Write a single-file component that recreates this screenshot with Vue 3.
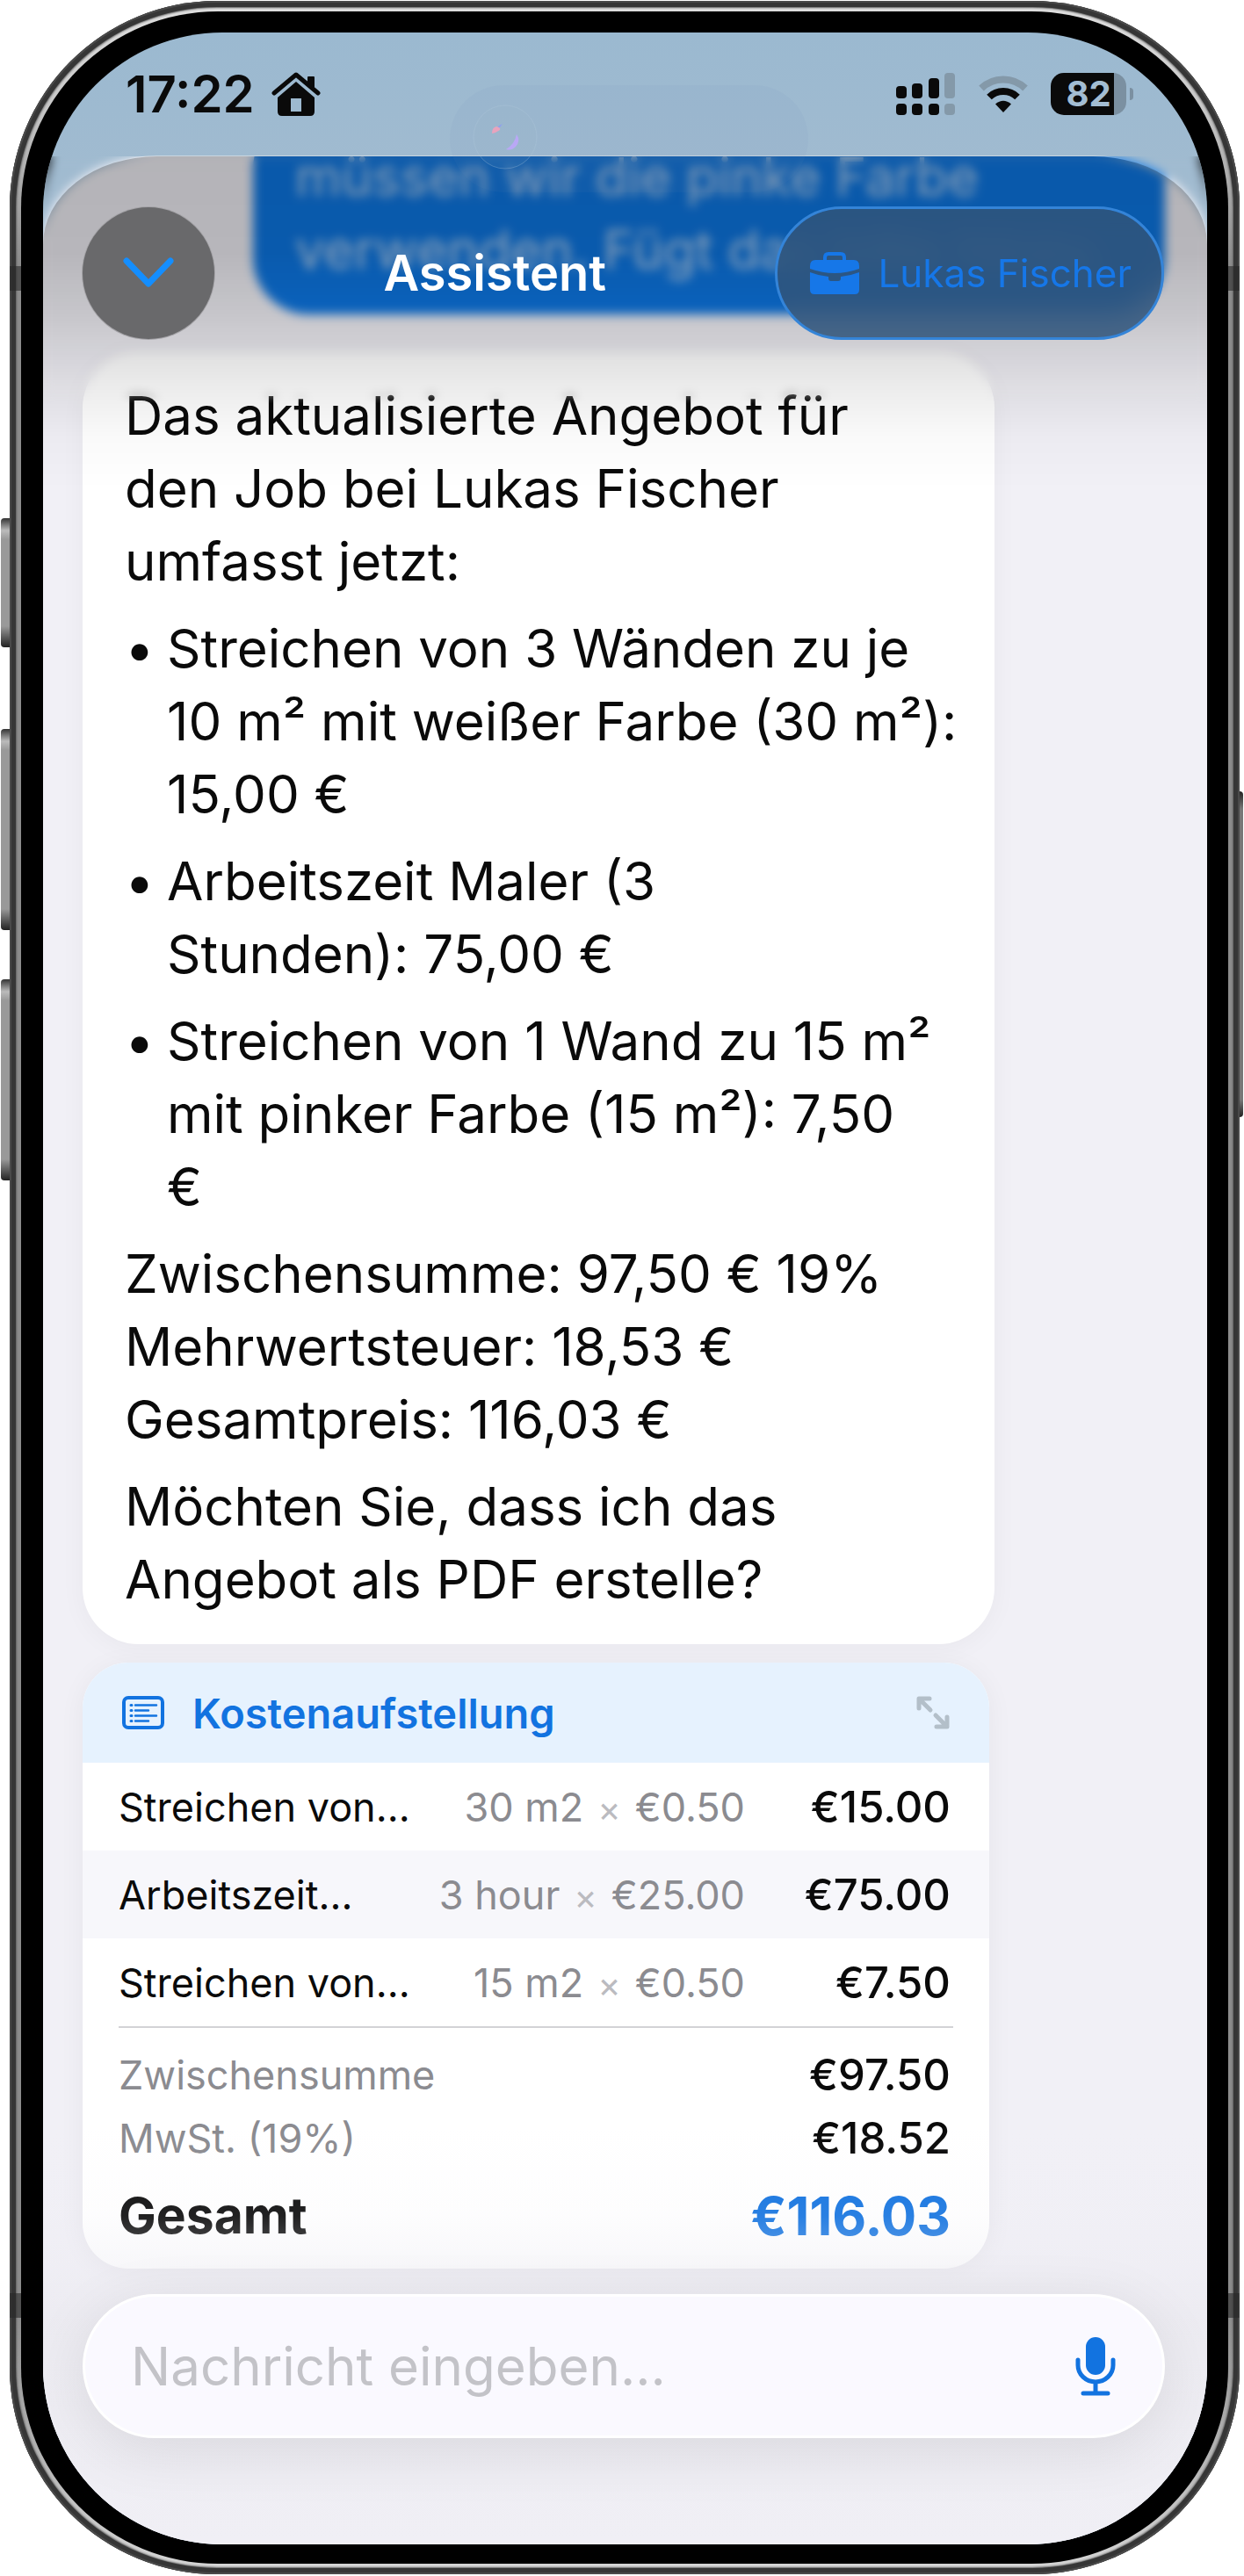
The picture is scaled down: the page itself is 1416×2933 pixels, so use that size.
<template>
    <div class="stage">
        <div class="phone">
            <!-- Hardware buttons and antenna bands -->
            <span class="side-key key-action"></span>
            <span class="side-key key-up"></span>
            <span class="side-key key-down"></span>
            <span class="side-key key-power"></span>
            <span class="antenna antenna-top"></span>
            <span class="antenna antenna-bottom"></span>

            <div class="bezel">
                <div class="screen">
                    <div class="status-bar">
                        <div class="status-left">
                            <span class="clock">17:22</span>
                            <svg class="icon-home" width="56" height="50" viewBox="0 0 56 50" fill="#0a0a0a">
                                <path d="M3 24 28 3 53 24" fill="none" stroke="#0a0a0a" stroke-width="5" stroke-linecap="round" stroke-linejoin="round"></path>
                                <path d="M41 6q0-1 1-1h6q1 0 1 1v14l-8-7z"></path>
                                <path fill-rule="evenodd" d="M28 11 49 29v16q0 5-5 5H12q-5 0-5-5V29zM22 30v15h12V30z"></path>
                            </svg>
                        </div>
                        <div class="status-right">
                            <svg width="68" height="48" viewBox="0 0 68 48" fill="#0a0a0a">
                                <rect x="0" y="15" width="12" height="14" rx="4"></rect>
                                <rect x="18" y="12" width="12" height="17" rx="4"></rect>
                                <rect x="37" y="6" width="12" height="23" rx="4"></rect>
                                <rect x="55" y="0" width="12" height="29" rx="4" fill="#8499a9"></rect>
                                <rect x="0" y="35" width="12" height="13" rx="4"></rect>
                                <rect x="18" y="35" width="12" height="13" rx="4"></rect>
                                <rect x="37" y="35" width="12" height="13" rx="4"></rect>
                                <rect x="55" y="35" width="12" height="13" rx="4" fill="#8499a9"></rect>
                            </svg>
                            <svg class="icon-wifi" width="58" height="43" viewBox="0 0 58 43">
                                <path d="M4 15.500A36 36 0 0 1 54 15.500" fill="none" stroke="#8499a9" stroke-width="8"></path>
                                <path d="M13 25.500A23 23 0 0 1 45 25.500" fill="none" stroke="#0a0a0a" stroke-width="8"></path>
                                <path d="M29 43 20 33.500Q29 26 38 33.500Z" fill="#0a0a0a"></path>
                            </svg>
                            <div class="battery">
                                <span class="battery-body">82</span>
                                <span class="battery-nub"></span>
                            </div>
                        </div>
                    </div>

                    <div class="sheet">
                        <div class="thread">
                            <div class="bubble bubble-user">
                                müssen wir die pinke Farbe<br>
                                verwenden. Fügt das bitte hinzu.
                            </div>

                            <div class="bubble bubble-assistant">
                                <p>Das aktualisierte Angebot für<br>den Job bei Lukas Fischer<br>umfasst jetzt:</p>
                                <ul>
                                    <li v-for="(item, i) in offerItems" :key="i">
                                        <span class="bullet">•</span>
                                        <span class="item-text">
                                            <template v-for="(line, n) in item" :key="n"><br v-if="n">{{ line }}</template>
                                        </span>
                                    </li>
                                </ul>
                                <p>Zwischensumme: 97,50 € 19%<br>Mehrwertsteuer: 18,53 €<br>Gesamtpreis: 116,03 €</p>
                                <p>Möchten Sie, dass ich das<br>Angebot als PDF erstelle?</p>
                            </div>

                            <section class="cost-card">
                                <header class="cost-header">
                                    <svg width="48" height="38" viewBox="0 0 48 38" fill="none" stroke="#1273e0">
                                        <rect x="2" y="2" width="44" height="34" rx="5" stroke-width="4"></rect>
                                        <path d="M15 10.500h24M15 16.500h15M15 22.500h24M15 28.500h15" stroke-width="2.500" stroke-linecap="round"></path>
                                        <path d="M10 10.500h1M10 16.500h1M10 22.500h1M10 28.500h1" stroke-width="3" stroke-linecap="round"></path>
                                    </svg>
                                    <h2>Kostenaufstellung</h2>
                                    <button class="expand" type="button" aria-label="Vergrößern">
                                        <svg width="38" height="38" viewBox="0 0 38 38" fill="none" stroke="#b3bfc9" stroke-width="5" stroke-linecap="round" stroke-linejoin="round">
                                            <path d="M3 14V3h12M4 4l12 12"></path>
                                            <path d="M35 24v11H23M34 34 22 22"></path>
                                        </svg>
                                    </button>
                                </header>
                                <table class="cost-table">
                                    <tbody>
                                        <tr v-for="(row, i) in rows" :key="i">
                                            <td class="cell-name">{{ row.name }}</td>
                                            <td class="cell-qty">{{ row.qty }}<span class="times">×</span>{{ row.price }}</td>
                                            <td class="cell-total">{{ row.total }}</td>
                                        </tr>
                                    </tbody>
                                </table>
                                <dl class="summary">
                                    <div class="summary-row">
                                        <dt>Zwischensumme</dt>
                                        <dd>€97.50</dd>
                                    </div>
                                    <div class="summary-row">
                                        <dt>MwSt. (19%)</dt>
                                        <dd>€18.52</dd>
                                    </div>
                                    <div class="summary-row is-total">
                                        <dt>Gesamt</dt>
                                        <dd>€116.03</dd>
                                    </div>
                                </dl>
                            </section>
                        </div>

                        <form class="composer" @submit.prevent>
                            <div class="composer-field">
                                <input v-model="draft" type="text" placeholder="Nachricht eingeben..." aria-label="Nachricht eingeben">
                                <button class="mic" type="button" aria-label="Diktieren">
                                    <svg width="48" height="68" viewBox="0 0 48 68" fill="none" stroke="#1273e0" stroke-width="5" stroke-linecap="round">
                                        <rect x="13" y="1" width="22" height="43" rx="11" fill="#1273e0" stroke="none"></rect>
                                        <path d="M4 27v6a20 19 0 0 0 40 0v-6M24 52v12M10 65h28"></path>
                                    </svg>
                                </button>
                            </div>
                        </form>

                        <!-- Floating header over the scrolled thread -->
                        <div class="header-blur"></div>
                        <div class="header-shade"></div>
                        <header class="sheet-header">
                            <button class="close" type="button" aria-label="Schließen">
                                <svg width="60" height="36" viewBox="0 0 60 36" fill="none" stroke="#148eff" stroke-width="7" stroke-linecap="round" stroke-linejoin="round">
                                    <path d="M5 4 30 30 55 4"></path>
                                </svg>
                            </button>
                            <h1>Assistent</h1>
                            <button class="customer" type="button">
                                <svg width="58" height="50" viewBox="0 0 58 50" fill="#1677e8">
                                    <path d="M18 12V7q0-4 4-4h14q4 0 4 4v5" fill="none" stroke="#1677e8" stroke-width="4"></path>
                                    <path d="M7 10h44q6 0 6 7v3q-28 10-56 0v-3q0-7 6-7z"></path>
                                    <path d="M1 24q10 4 21 5v2q0 3 3 3h8q3 0 3-3v-2q11-1 21-5v20q0 5-5 5H6q-5 0-5-5z"></path>
                                </svg>
                                <span>Lukas Fischer</span>
                            </button>
                        </header>
                    </div>

                    <div class="island">
                        <svg class="lens" width="74" height="74" viewBox="0 0 74 74">
                            <circle cx="37" cy="37" r="36" fill="#9cb4cf" fill-opacity="0.08" stroke="#b4c9db" stroke-opacity="0.3"></circle>
                            <path d="M28 26q3-3 6-4l-3 4z" fill="#8f9ff0"></path>
                            <path d="M22 33q0-7 5-8 5 1 4 4-4 3-9 4z" fill="#e9a3bd"></path>
                            <path d="M38 51q10-6 12-17 5 7-1 14-5 5-11 3z" fill="#b9a8f5"></path>
                        </svg>
                    </div>
                </div>
            </div>
        </div>
    </div>
</template>

<script setup>
import { ref } from 'vue';

const draft = ref('');

const offerItems = [
    ['Streichen von 3 Wänden zu je', '10 m² mit weißer Farbe (30 m²):', '15,00 €'],
    ['Arbeitszeit Maler (3', 'Stunden): 75,00 €'],
    ['Streichen von 1 Wand zu 15 m²', 'mit pinker Farbe (15 m²): 7,50', '€'],
];

const rows = [
    { name: 'Streichen von...', qty: '30 m2', price: '€0.50', total: '€15.00' },
    { name: 'Arbeitszeit...', qty: '3 hour', price: '€25.00', total: '€75.00' },
    { name: 'Streichen von...', qty: '15 m2', price: '€0.50', total: '€7.50' },
];
</script>

<style>
body {
    background: #fff;
}
</style>

<style scoped>
.stage {
    padding: 1px 5px 2px 11px;
    font-family: Inter, "Liberation Sans", sans-serif;
    color: #0a0a0a;
}

h1,
h2,
p,
ul,
dl,
dd {
    margin: 0;
    padding: 0;
}

button {
    padding: 0;
    border: 0;
    background: none;
    font: inherit;
    color: inherit;
}

svg {
    display: block;
    flex-shrink: 0;
}

/* Phone body */
.phone {
    position: relative;
    padding: 12px 13px;
    border-radius: 236px;
    background: linear-gradient(#e0e0e0, #c8c8c8 120px, #8c8c8c 300px, #8c8c8c calc(100% - 300px), #b8b8b8 calc(100% - 120px), #d8d8d8);
    box-shadow: inset 0 0 0 2px #4a4a4a, inset 0 0 0 7px #363636, inset 0 0 2px 8px #606060;
}

.bezel {
    position: relative;
    padding: 24px 24px 22px 25px;
    border-radius: 224px;
    background: #000;
}

.screen {
    position: relative;
    overflow: hidden;
    border-radius: 204px;
    background: linear-gradient(#9bb9d0, #a1bbd0 178px);
}

.side-key {
    position: absolute;
    left: -10px;
    width: 10px;
    border-radius: 4px 0 0 4px;
    background: linear-gradient(#333, #bbb 14px, #999 24px, #999 calc(100% - 24px), #222);
}

.key-action {
    top: 589px;
    height: 147px;
}

.key-up {
    top: 829px;
    height: 229px;
}

.key-down {
    top: 1114px;
    height: 229px;
}

.key-power {
    top: 900px;
    left: auto;
    right: -4px;
    width: 4px;
    height: 371px;
    border-radius: 0 4px 4px 0;
    background: linear-gradient(#222, #777 20px, #777 calc(100% - 20px), #222);
}

.antenna {
    position: absolute;
    left: 0;
    right: 0;
    height: 28px;
    background: rgba(40, 40, 40, 0.6);
}

.antenna-top {
    top: 302px;
}

.antenna-bottom {
    bottom: 292px;
}

/* Status bar */
.status-bar {
    display: flex;
    justify-content: space-between;
    align-items: center;
    box-sizing: border-box;
    height: 141px;
    padding: 0 84px 2px 94px;
}

.status-left,
.status-right {
    display: flex;
    align-items: center;
}

.status-left {
    gap: 19px;
}

.status-right {
    gap: 25px;
}

.clock {
    font-size: 58px;
    font-weight: 600;
    line-height: 60px;
}

.battery {
    display: flex;
    align-items: center;
    gap: 4px;
}

.battery-body {
    width: 86px;
    border-radius: 15px;
    background: linear-gradient(90deg, #0a0a0a 72px, #7b90a1 72px);
    color: #a3bdd2;
    font-size: 40px;
    font-weight: 700;
    line-height: 48px;
    text-align: center;
}

.battery-nub {
    width: 4px;
    height: 14px;
    border-radius: 0 4px 4px 0;
    background: #7b90a1;
}

.island {
    position: absolute;
    top: 60px;
    left: 50%;
    width: 408px;
    height: 122px;
    margin-left: -200px;
    border-radius: 61px;
    background: rgba(110, 145, 185, 0.07);
}

.lens {
    position: absolute;
    top: 22px;
    left: 26px;
}

/* Sheet */
.sheet {
    position: relative;
    overflow: hidden;
    border-radius: 130px 130px 0 0 / 100px 100px 0 0;
    background: #f1f0f6;
    box-shadow: 0 -1px 0 #c9d6e0;
}

.thread {
    display: flex;
    flex-direction: column;
    margin-top: -50px;
    padding: 0 48px 0 45px;
}

.bubble {
    box-sizing: border-box;
    width: 100%;
    max-width: 1038px;
    padding: 32px 48px;
    border-radius: 64px;
    font-size: 60px;
    line-height: 83px;
    white-space: nowrap;
}

.bubble-user {
    align-self: flex-end;
    margin-bottom: 42px;
    background: #0d77e4;
    color: #b5d3f2;
}

.bubble-assistant {
    display: flex;
    flex-direction: column;
    gap: 16px;
    margin-bottom: 21px;
    background: #fff;
    box-shadow: 0 4px 30px rgba(0, 0, 0, 0.04);
}

.bubble-assistant ul {
    display: flex;
    flex-direction: column;
    gap: 16px;
    list-style: none;
}

.bubble-assistant li {
    display: flex;
}

.bullet {
    width: 48px;
    flex-shrink: 0;
}

/* Cost breakdown */
.cost-card {
    overflow: hidden;
    width: 100%;
    max-width: 1032px;
    border-radius: 52px;
    background: #fff;
    box-shadow: 0 4px 30px rgba(0, 0, 0, 0.05);
}

.cost-header {
    display: flex;
    align-items: center;
    height: 114px;
    padding: 0 45px;
    background: #e6f2fe;
}

.cost-header h2 {
    flex: 1;
    margin-left: 32px;
    color: #1273e0;
    font-size: 47px;
    font-weight: 600;
}

.cost-table {
    width: 100%;
    border-collapse: collapse;
}

.cost-table tr {
    height: 100px;
}

.cost-table tr:nth-child(even) {
    background: #f7f7fb;
}

.cost-table td {
    padding: 0;
    white-space: nowrap;
}

.cost-table .cell-name {
    padding-left: 41px;
    font-size: 45px;
}

.cost-table .cell-qty {
    color: #8b8b90;
    font-size: 45px;
    text-align: right;
}

.times {
    margin: 0 16px;
    color: #bbbbc0;
    font-size: 40px;
}

.cost-table .cell-total {
    width: 234px;
    padding-right: 44px;
    font-size: 49px;
    font-weight: 500;
    text-align: right;
}

.summary {
    margin: 0 41px;
    padding: 18px 3px 8px 0;
    border-top: 2px solid #d3d3d6;
}

.summary-row {
    display: flex;
    justify-content: space-between;
    font-size: 45px;
    line-height: 72px;
}

.summary-row dt {
    color: #8b8b90;
}

.summary-row dd {
    font-size: 49px;
    font-weight: 500;
}

.summary-row.is-total {
    font-size: 57px;
    font-weight: 700;
    line-height: 104px;
}

.summary-row.is-total dt {
    color: #0a0a0a;
}

.summary-row.is-total dd {
    color: #1273e0;
    font-size: 60px;
    font-weight: 700;
}

/* Composer */
.composer {
    position: relative;
    padding: 29px 48px 121px 45px;
}

.composer::before {
    content: "";
    position: absolute;
    top: -160px;
    left: 0;
    right: 0;
    bottom: 0;
    background: linear-gradient(rgba(236, 235, 242, 0), rgba(236, 235, 242, 0.1) 100px, rgba(236, 235, 242, 0.4) 160px, rgba(236, 235, 241, 0.9) 220px, rgba(240, 239, 245, 0.9));
}

.composer-field {
    position: relative;
    display: flex;
    align-items: center;
    box-sizing: border-box;
    height: 164px;
    padding: 0 52px;
    border: 3px solid #fff;
    border-radius: 82px;
    background: #faf9ff;
    box-shadow: 0 14px 70px rgba(0, 0, 0, 0.09);
}

.composer-field input {
    flex: 1;
    min-width: 0;
    padding: 0;
    border: 0;
    outline: 0;
    background: none;
    font: 400 60px/83px Inter, "Liberation Sans", sans-serif;
    color: #0a0a0a;
}

.composer-field input::placeholder {
    color: #c3c3c8;
    opacity: 1;
}

/* Header */
.header-blur,
.header-shade {
    position: absolute;
    top: 0;
    left: 0;
    right: 0;
    pointer-events: none;
}

.header-blur {
    height: 282px;
    backdrop-filter: blur(6px);
    mask-image: linear-gradient(#000 250px, transparent);
}

.header-shade {
    height: 380px;
    background: linear-gradient(rgba(0, 0, 0, 0.25), rgba(0, 0, 0, 0.24) 110px, rgba(0, 0, 0, 0.17) 185px, rgba(0, 0, 0, 0.08) 260px, rgba(0, 0, 0, 0.02) 320px, transparent);
}

.sheet-header {
    position: absolute;
    top: 57px;
    left: 45px;
    right: 49px;
    display: flex;
    align-items: center;
    justify-content: space-between;
}

.close {
    display: flex;
    align-items: center;
    justify-content: center;
    width: 150px;
    height: 150px;
    border-radius: 50%;
    background: #69696b;
    box-shadow: 0 0 0 1px #a5a4a8;
}

.sheet-header h1 {
    color: #fff;
    font-size: 56px;
    font-weight: 600;
}

.customer {
    display: flex;
    align-items: center;
    gap: 20px;
    box-sizing: border-box;
    height: 152px;
    padding: 0 34px 0 36px;
    border: 3px solid #3484d8;
    border-radius: 76px;
    background: rgba(48, 84, 122, 0.86);
    backdrop-filter: blur(14px);
    color: #1677e8;
    font-size: 44px;
}
</style>
